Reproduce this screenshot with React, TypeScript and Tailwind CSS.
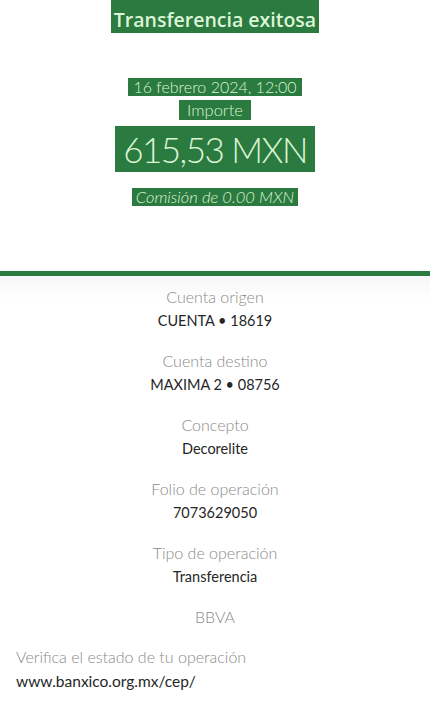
import React from "react";

const G = "bg-[#2b7a3f] text-[#dcf5d6]";

function Row({ label, value }: { label: string; value: string }) {
  return (
    <div className="flex flex-col items-center h-[64px] pt-[11px]">
      <div className="text-[16px] leading-[20px] text-[#8a8a8a] font-light">{label}</div>
      <div className="text-[14.5px] leading-[20px] text-[#262626] mt-[4px]">{value}</div>
    </div>
  );
}

export default function App() {
  return (
    <div className="w-[430px] h-[701px] bg-white overflow-hidden" style={{ fontFamily: "Lato, 'Open Sans', sans-serif" }}>
      <div className="h-[271px] flex flex-col items-center">
        <div
          className={`${G} pt-[9px] pb-[2px] px-[3px] text-[19.5px] font-semibold leading-[22px]`}
          style={{ fontFamily: "'Open Sans', sans-serif" }}
        >
          Transferencia exitosa
        </div>
        <div className={`${G} mt-[45px] px-[5px] text-[16px] font-light leading-[18px]`}>16 febrero 2024, 12:00</div>
        <div className={`${G} mt-[4px] px-[8px] py-[1px] text-[16.5px] font-light leading-[18px]`}>Importe</div>
        <div className={`${G} mt-[6px] px-[8px] py-[2px] text-[35px] font-light leading-[42px] tracking-[-1.5px]`}>615,53 MXN</div>
        <div className={`${G} mt-[16px] px-[4px] text-[16.5px] italic font-light leading-[18px]`}>Comisión de 0.00 MXN</div>
      </div>
      <div className="h-[5px] bg-[#2b7a3f]" />
      <div className="bg-gradient-to-b from-[#f6f6f8] to-white to-[24px]">
        <Row label="Cuenta origen" value="CUENTA • 18619" />
        <Row label="Cuenta destino" value="MAXIMA 2 • 08756" />
        <Row label="Concepto" value="Decorelite" />
        <Row label="Folio de operación" value="7073629050" />
        <Row label="Tipo de operación" value="Transferencia" />
        <div className="flex justify-center pt-[11px] h-[51px] text-[16px] leading-[20px] text-[#8a8a8a] font-light">BBVA</div>
        <div className="px-[16px]">
          <div className="text-[16px] leading-[20px] text-[#8a8a8a] font-light">Verifica el estado de tu operación</div>
          <div className="text-[15.5px] leading-[20px] text-[#262626] mt-[4px]">www.banxico.org.mx/cep/</div>
        </div>
      </div>
    </div>
  );
}
